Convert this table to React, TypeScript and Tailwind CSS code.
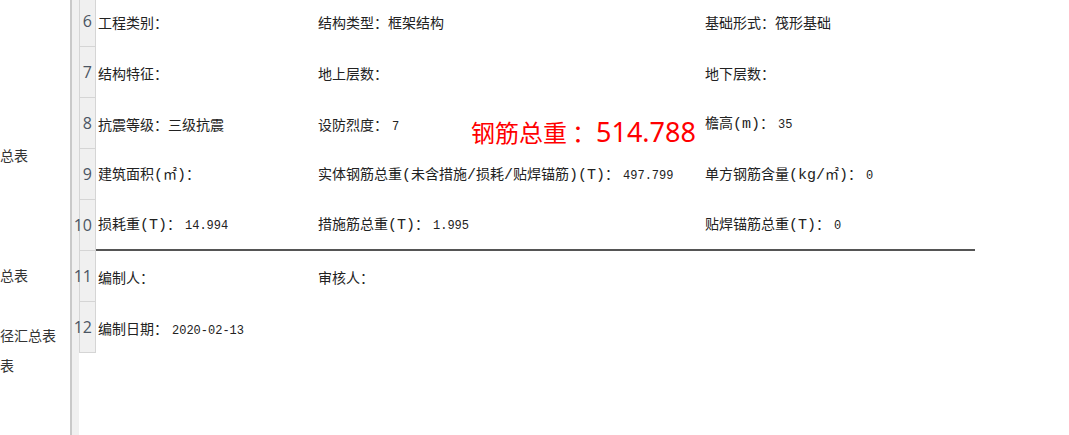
import React from "react";

type Cell = { label: string; value?: string };

const rows: { no: number; cells: Cell[] }[] = [
  { no: 6, cells: [{ label: "工程类别：" }, { label: "结构类型：", value: "框架结构" }, { label: "基础形式：", value: "筏形基础" }] },
  { no: 7, cells: [{ label: "结构特征：" }, { label: "地上层数：" }, { label: "地下层数：" }] },
  { no: 8, cells: [{ label: "抗震等级：", value: "三级抗震" }, { label: "设防烈度：", value: "7" }, { label: "檐高(m)：", value: "35" }] },
  { no: 9, cells: [{ label: "建筑面积(㎡)：" }, { label: "实体钢筋总重(未含措施/损耗/贴焊锚筋)(T)：", value: "497.799" }, { label: "单方钢筋含量(kg/㎡)：", value: "0" }] },
  { no: 10, cells: [{ label: "损耗重(T)：", value: "14.994" }, { label: "措施筋总重(T)：", value: "1.995" }, { label: "贴焊锚筋总重(T)：", value: "0" }] },
  { no: 11, cells: [{ label: "编制人：" }, { label: "审核人：" }, { label: "" }] },
  { no: 12, cells: [{ label: "编制日期：", value: "2020-02-13" }, { label: "" }, { label: "" }] },
];

const cjk = { fontFamily: '"Noto Sans CJK SC", sans-serif' };
const mono = { fontFamily: '"Liberation Mono", "Noto Sans CJK SC", monospace' };

const isAscii = (s: string) => /^[\x00-\x7f]+$/.test(s);

// split label into CJK and half-width runs
function Label({ text }: { text: string }) {
  const parts = text.match(/[\x00-\x7f]+|[^\x00-\x7f]+/g) || [];
  return (
    <>
      {parts.map((p, i) =>
        isAscii(p) ? (
          <span key={i} className="text-[15px]" style={mono}>{p}</span>
        ) : (
          <span key={i}>{p}</span>
        )
      )}
    </>
  );
}

function CellText({ cell }: { cell: Cell }) {
  return (
    <span className="text-[14px] text-[#222] whitespace-nowrap" style={cjk}>
      <Label text={cell.label} />
      {cell.value &&
        (isAscii(cell.value) ? (
          <span className="text-[12px] ml-[4px]" style={mono}>{cell.value}</span>
        ) : (
          cell.value
        ))}
    </span>
  );
}

export default function App() {
  return (
    <div className="w-[1069px] h-[435px] bg-white flex overflow-hidden relative">
      {/* left tree panel, clipped */}
      <div className="w-[70px] shrink-0 relative overflow-hidden text-[14px] text-[#333]" style={cjk}>
        <div className="absolute left-0 top-[145px]">总表</div>
        <div className="absolute left-0 top-[265px]">总表</div>
        <div className="absolute left-0 top-[325px]">径汇总表</div>
        <div className="absolute left-0 top-[355px]">表</div>
      </div>
      <div className="w-[2px] bg-[#c9c9c9] shrink-0" />
      <div className="w-[7px] bg-[#f0f0f0] shrink-0" />
      <div className="flex-1 relative">
        <div className="mt-[-4px] flex flex-col">
          {rows.map((r) => (
            <div key={r.no} className="flex h-[51px]">
              <div
                className="w-[17px] shrink-0 bg-[#f0f0f0] border-x border-b border-[#d5d5d5] flex items-center justify-end pr-[3px] text-[16px] text-[#4b5563] leading-none"
                style={{ fontFamily: '"Open Sans", sans-serif' }}
              >
                {r.no}
              </div>
              <div className={`flex-1 flex items-center ${r.no === 10 ? "border-b-2 border-[#555] mr-[94px]" : ""}`}>
                <div className="w-[222px] pl-[2px] shrink-0"><CellText cell={r.cells[0]} /></div>
                <div className="w-[387px] shrink-0"><CellText cell={r.cells[1]} /></div>
                <div className="shrink-0"><CellText cell={r.cells[2]} /></div>
              </div>
            </div>
          ))}
        </div>
        <div className="absolute left-[392px] top-[114px] text-[24px] text-[#ff0000] leading-[36px] whitespace-nowrap" style={cjk}>
          钢筋总重<span className="ml-[5px]">：</span>
          <span className="text-[27px]" style={{ fontFamily: '"Noto Sans", sans-serif' }}>514.788</span>
        </div>
      </div>
    </div>
  );
}
